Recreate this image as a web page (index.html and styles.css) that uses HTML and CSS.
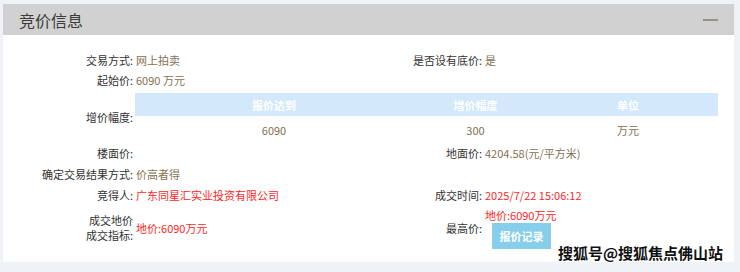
FILE: index.html
```html
<!DOCTYPE html>
<html lang="zh-CN">

<head>
    <meta charset="UTF-8">
    <meta name="viewport" content="width=device-width, initial-scale=1.0">
    <title>竞价信息</title>
    <link rel="stylesheet" href="styles.css">
</head>

<body>
    <div class="panel">
        <div class="panel-head">
            <h2>竞价信息</h2>
            <span class="fold"></span>
        </div>

        <div class="info">
            <div class="label row-s">交易方式:</div>
            <div class="value row-s">网上拍卖</div>
            <div class="label row-s">是否设有底价:</div>
            <div class="value row-s">是</div>

            <div class="label row-s">起始价:</div>
            <div class="value row-s">6090 万元</div>
            <div class="label row-s"></div>
            <div class="value row-s"></div>

            <div class="label">增价幅度:</div>
            <div class="range-cell">
                <table class="range">
                    <tr>
                        <th class="c1">报价达到</th>
                        <th class="c2">增价幅度</th>
                        <th class="c3">单位</th>
                    </tr>
                    <tr>
                        <td>6090</td>
                        <td>300</td>
                        <td>万元</td>
                    </tr>
                </table>
            </div>

            <div class="label row-m">楼面价:</div>
            <div class="value row-m"></div>
            <div class="label row-m">地面价:</div>
            <div class="value row-m">4204.58(元/平方米)</div>

            <div class="label row-m">确定交易结果方式:</div>
            <div class="value row-m">价高者得</div>
            <div class="label row-m"></div>
            <div class="value row-m"></div>

            <div class="label row-m">竞得人:</div>
            <div class="value row-m red">广东同星汇实业投资有限公司</div>
            <div class="label row-m">成交时间:</div>
            <div class="value row-m red">2025/7/22 15:06:12</div>

            <div class="label two-line">成交地价<br>成交指标:</div>
            <div class="value red">地价:6090万元</div>
            <div class="label">最高价:</div>
            <div class="value top-price">
                <span class="red">地价:6090万元</span>
                <button class="btn-record">报价记录</button>
            </div>
        </div>
    </div>

    <div class="watermark">搜狐号@搜狐焦点佛山站</div>
</body>

</html>
```

FILE: styles.css
```css
body {
    margin: 0;
    padding: 4px 6px 0 3px;
    background-color: #eff3f7;
    font-family: "Noto Sans CJK SC", sans-serif;
    font-size: 11px;
    color: #333;
    height: 272px;
    box-sizing: border-box;
    position: relative;
    overflow: hidden;
}

.panel {
    background: white;
    width: 731px;
    padding-bottom: 13px;
}

.panel-head {
    background: #d1d1d1;
    height: 31px;
    display: flex;
    align-items: center;
    justify-content: space-between;
    padding: 0 16px;
}

.panel-head h2 {
    margin: 0;
    font-size: 16px;
    font-weight: normal;
    color: #3c3c3c;
}

.fold {
    width: 15px;
    height: 2px;
    background: #98937f;
}

.info {
    display: grid;
    grid-template-columns: 130px 219px 130px 1fr;
    align-items: center;
    padding-top: 15px;
}

.label {
    text-align: right;
    white-space: nowrap;
}

.value {
    padding-left: 3px;
    color: #85704f;
    white-space: nowrap;
}

.row-s {
    line-height: 20px;
    height: 20px;
}

.row-m {
    line-height: 21px;
    height: 21px;
}

.red {
    color: #ff1f1f;
}

.range-cell {
    grid-column: 2 / 5;
    padding: 3px 16px 0 2px;
}

.range {
    width: 100%;
    border-collapse: collapse;
}

.range th {
    background: #d3e8fb;
    color: white;
    font-weight: bold;
    height: 23px;
    padding: 0;
}

.range td {
    height: 27px;
    text-align: center;
    color: #85704f;
    padding: 0;
}

.range .c1 {
    width: 278px;
}

.range .c2 {
    width: 125px;
}

.two-line {
    line-height: 15px;
}

.top-price {
    display: flex;
    flex-direction: column;
    align-items: flex-start;
    padding-top: 2px;
    line-height: 15px;
}

.btn-record {
    margin: 0 0 0 7px;
    width: 59px;
    height: 26px;
    border: none;
    background: #87ceeb;
    color: white;
    font-family: "Noto Sans CJK SC", sans-serif;
    font-size: 11px;
    font-weight: bold;
    padding: 0;
}

.watermark {
    position: absolute;
    right: 17px;
    bottom: 9px;
    font-size: 15px;
    font-weight: bold;
    color: #111;
    text-shadow: 1px 0 0 #fff, -1px 0 0 #fff, 0 1px 0 #fff, 0 -1px 0 #fff;
}
```
